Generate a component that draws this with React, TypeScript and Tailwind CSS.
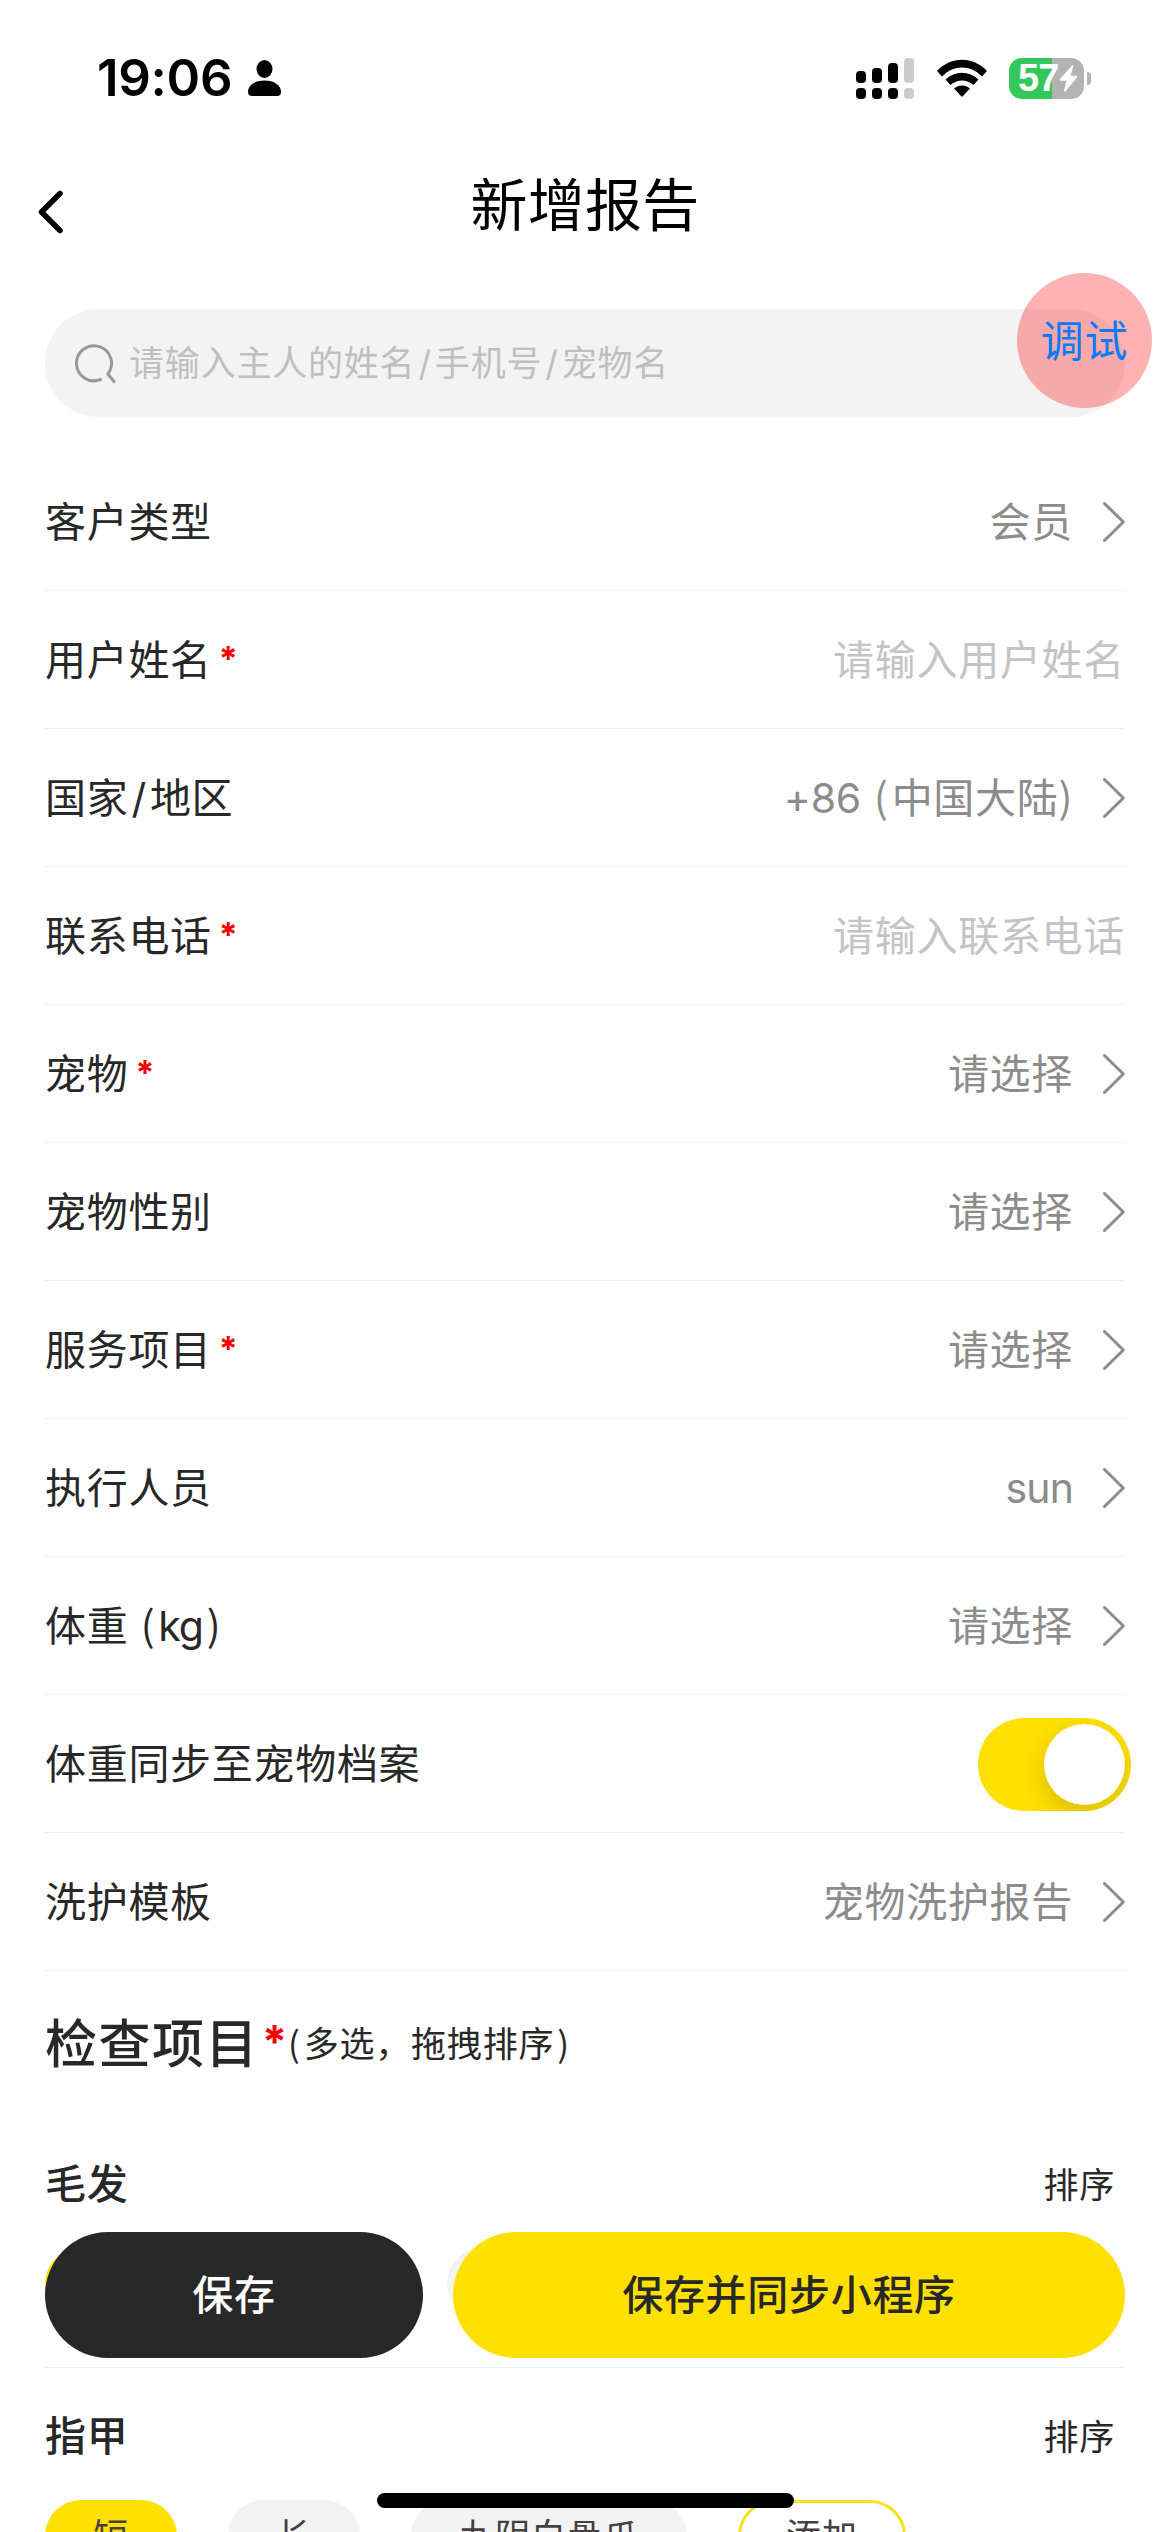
import React from "react";

type RowProps = {
  label: React.ReactNode;
  required?: boolean;
  value?: React.ReactNode;
  placeholder?: string;
  toggle?: boolean;
};

function Chevron() {
  return (
    <svg className="ml-[30px] h-[40px] w-[22px] shrink-0" viewBox="0 0 22 40" fill="none">
      <path d="M1.5 1.5 L20.3 20 L1.5 38.5" stroke="#8c8c8c" strokeWidth="3" strokeLinejoin="round" strokeLinecap="round" />
    </svg>
  );
}

function Switch() {
  return (
    <div className="relative -mr-1.5 flex h-[93px] w-[153px] items-center justify-end overflow-hidden rounded-full bg-[#ffe000] pr-1.5">
      <div className="size-[81px] rounded-full bg-white shadow-[0_9px_24px_rgba(0,0,0,0.16)]" />
    </div>
  );
}

function Row({ label, required, value, placeholder, toggle }: RowProps) {
  return (
    <div className="flex h-[138px] items-center justify-between border-b border-[#efefef] pt-px">
      <div className="flex items-center pt-[2px] text-[#282828]">
        <span>{label}</span>
        {required && <Star />}
      </div>
      {toggle && <Switch />}
      {placeholder && <span className="pt-[2px] text-[#c4c4c4]">{placeholder}</span>}
      {value && (
        <div className="flex items-center text-[#8c8c8c]">
          <span className="pt-[2px]">{value}</span>
          <Chevron />
        </div>
      )}
    </div>
  );
}

function Star() {
  return <span className="mt-[-5px] ml-[7px] text-[34px] leading-none font-bold text-[#f50000]">*</span>;
}

function Paren({ children, open }: { children: string; open?: boolean }) {
  return <span className={`font-['Noto_Sans_CJK_SC'] leading-none ${open ? "mr-[3px]" : ""}`}>{children}</span>;
}

function Chip({ text, active, outline }: { text: string; active?: boolean; outline?: boolean }) {
  const look = active ? "bg-[#ffe000]" : outline ? "border-[3px] border-[#fddf22] bg-white" : "bg-[#f3f3f3]";
  return (
    <div className={`flex h-[72px] items-center justify-center rounded-full text-[35px] tracking-[1px] text-[#453f42] ${look}`}>
      <span className={outline ? "px-[45px]" : "px-12"}>{text}</span>
    </div>
  );
}

function GroupTitle({ text }: { text: string }) {
  return (
    <div className="flex h-[60px] items-center justify-between text-[#282828]">
      <span className="font-medium">{text}</span>
      <span className="mr-[10px] text-[35px] tracking-[0.7px]">排序</span>
    </div>
  );
}

function StatusBar() {
  return (
    <div className="flex h-[156px] items-center">
      <span className="ml-[97px] w-[151px] text-[51px] font-semibold tracking-[-0.3px] text-black">19:06</span>
      <svg className="h-[36px] w-[33px]" viewBox="0 0 33 36">
        <ellipse cx="16.5" cy="9" rx="8" ry="9" />
        <path d="M0 32 C0 25 7 20.5 16.5 20.5 S33 25 33 32 C33 34.5 31.5 36 29 36 H4 C1.5 36 0 34.5 0 32Z" />
      </svg>
      <svg className="ml-[575px] h-[41px] w-[58px]" viewBox="0 0 58 41">
        <rect x="0" y="13" width="10" height="12" rx="4" />
        <rect x="16" y="10" width="10" height="15" rx="4" />
        <rect x="32" y="5" width="10" height="20" rx="4" />
        <rect x="48" y="0" width="10" height="25" rx="4" fill="#ccc" />
        <rect x="0" y="30" width="10" height="11" rx="4" />
        <rect x="16" y="30" width="10" height="11" rx="4" />
        <rect x="32" y="30" width="10" height="11" rx="4" />
        <rect x="48" y="30" width="10" height="11" rx="4" fill="#ccc" />
      </svg>
      <svg className="ml-[22px] h-[38px] w-[52px]" viewBox="0 0 52 38">
        <path d="M1 12 C15 -3 37 -3 51 12 L46 17.5 C34.5 5.5 17.5 5.5 6 17.5 Z" />
        <path d="M9.5 20.5 C19 11.5 33 11.5 42.5 20.5 L37.5 26 C31 20 21 20 14.500 26 Z" />
        <path d="M18 29.500 C22.500 25.500 29.500 25.500 34 29.500 L26 38 Z" />
      </svg>
      <div className="ml-[21px] flex h-[41px] w-[75px] items-center rounded-[13px] bg-linear-to-r from-[#34c759] from-[57%] to-[#b3b3b3] to-[57%]">
        <span className="ml-[9px] w-[40px] font-['Liberation_Sans'] text-[38px] leading-none font-bold tracking-[-1px] text-white">57</span>
        <svg className="ml-px h-[27px] w-[19px]" viewBox="0 0 19 27" fill="#fff">
          <path d="M13 0.500 L1 14 C0.300 15 0.700 15.800 1.700 15.800 H7.500 L5 25.500 C4.800 26.700 5.800 27 6.500 26.200 L18 12.500 C18.800 11.500 18.300 10.800 17.300 10.800 H11.500 L14.300 1.300 C14.600 0.300 13.800 -0.200 13 0.500Z" />
        </svg>
      </div>
      <div className="ml-[3px] h-[13px] w-1 rounded-r-full bg-[#b3b3b3]" />
    </div>
  );
}

export default function App() {
  return (
    <div className="relative h-[2532px] w-[1170px] overflow-hidden bg-white font-['Inter','Noto_Sans_CJK_SC',sans-serif] text-[41px] tracking-[0.7px]">
      <StatusBar />

      <div className="relative flex h-[100px] items-center justify-center pb-0.5">
        <svg className="absolute top-[34px] left-[37px] h-[44px] w-[27px]" viewBox="0 0 27 44" fill="none">
          <path d="M23 3.500 L4.500 22 L23 40.500" stroke="#000" strokeWidth="5.500" strokeLinejoin="round" strokeLinecap="round" />
        </svg>
        <h1 className="text-[57px] leading-none tracking-[0.3px] text-black">新增报告</h1>
      </div>

      <div className="mx-[45px] mt-[53px] flex h-[108px] items-center rounded-full bg-[#f3f3f3] pl-[30px] text-[35px] tracking-[0.8px] text-[#bfbfbf]">
        <svg className="h-[42px] w-[42px]" viewBox="0 0 42 42" fill="none">
          <path d="M25.500 37.500 A17.500 17.500 0 1 1 32.800 32 L39 39.500" stroke="#999" strokeWidth="3" strokeLinecap="round" strokeLinejoin="round" />
        </svg>
        <span className="ml-3 pt-px">
          请输入主人的姓名<span className="mx-[3px]">/</span>手机号<span className="mx-[3px]">/</span>宠物名
        </span>
      </div>

      <div className="mx-[45px] mt-[36px]">
        <Row label="客户类型" value="会员" />
        <Row label="用户姓名" required placeholder="请输入用户姓名" />
        <Row
          label={
            <>
              国家<span className="mx-[3px]">/</span>地区
            </>
          }
          value={
            <>
              <span className="mr-[2px] tracking-[-0.3px]">+86 </span>
              <Paren open>(</Paren>中国大陆<Paren>)</Paren>
            </>
          }
        />
        <Row label="联系电话" required placeholder="请输入联系电话" />
        <Row label="宠物" required value="请选择" />
        <Row label="宠物性别" value="请选择" />
        <Row label="服务项目" required value="请选择" />
        <Row label="执行人员" value={<span className="tracking-[-0.9px]">sun</span>} />
        <Row
          label={
            <>
              体重 <Paren open>(</Paren>
              <span className="tracking-[-1.1px]">kg</span>
              <span className="ml-[4px]">
                <Paren>)</Paren>
              </span>
            </>
          }
          value="请选择"
        />
        <Row label="体重同步至宠物档案" toggle />
        <Row label="洗护模板" value="宠物洗护报告" />

        <div className="mt-px flex h-[145px] items-center text-[#282828]">
          <span className="text-[52px] font-medium tracking-[1.500px]">检查项目</span>
          <span className="mt-[-6px] ml-[3px] w-[26px] text-[45px] leading-none font-bold text-[#f50000]">*</span>
          <span className="text-[35px] tracking-[0.8px]">
            <Paren open>(</Paren>多选，拖拽排序
            <span className="ml-[3px]">
              <Paren>)</Paren>
            </span>
          </span>
        </div>

        <div className="mt-[38px]">
          <GroupTitle text="毛发" />
          <div className="mt-[33px] flex gap-[51px]">
            <div className="h-[72px] w-[132px] rounded-full bg-[#ffe000]" />
            <div className="h-[72px] w-[168px] rounded-full bg-[#f3f3f3]" />
            <div className="h-[72px] w-[168px] rounded-full bg-[#f3f3f3]" />
          </div>
        </div>

        <div className="mt-[47px] border-t border-[#efefef] pt-[39px]">
          <GroupTitle text="指甲" />
          <div className="mt-[33px] flex gap-[51px]">
            <Chip text="短" active />
            <Chip text="长" />
            <Chip text="九阴白骨爪" />
            <Chip text="添加" outline />
          </div>
        </div>
      </div>

      <div className="absolute inset-x-[45px] bottom-[174px] flex h-[126px] gap-[30px] font-medium">
        <button className="w-[378px] rounded-full bg-[#282828] pt-[2px] text-white">保存</button>
        <button className="flex-1 rounded-full bg-[#ffe000] pt-[2px] text-[#282828]">保存并同步小程序</button>
      </div>

      <div className="absolute top-[273px] left-[1017px] flex size-[135px] items-center justify-center rounded-full bg-[rgba(255,0,0,0.3)] pt-[2px] text-[43px] text-[#0a7af7]">
        调试
      </div>

      <div className="absolute bottom-6 left-[377px] h-[15px] w-[417px] rounded-full bg-black" />
    </div>
  );
}
